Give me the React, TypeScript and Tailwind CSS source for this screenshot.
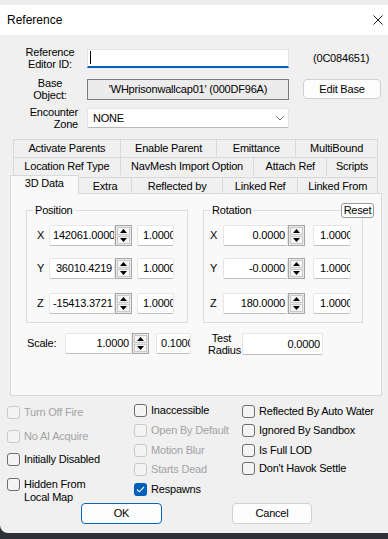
import React from "react";

// spin buttons next to the number boxes
function Spin() {
  return (
    <div className="flex h-[21px] w-[17px] shrink-0 flex-col gap-[1px] border border-[#a6a6a6] bg-[#e9e9e9] p-[1px]">
      <div className="flex flex-1 items-center justify-center border border-[#c9c9c9] bg-[#f6f6f6]">
        <svg width="7" height="4" viewBox="0 0 7 4">
          <path d="M3.5 0L7 4H0z" fill="#000" />
        </svg>
      </div>
      <div className="flex flex-1 items-center justify-center border border-[#c9c9c9] bg-[#f6f6f6]">
        <svg width="7" height="4" viewBox="0 0 7 4">
          <path d="M0 0h7L3.5 4z" fill="#000" />
        </svg>
      </div>
    </div>
  );
}

function Num({ v, className = "" }: { v: string; className?: string }) {
  return (
    <div
      className={`h-[21px] shrink-0 overflow-hidden whitespace-nowrap rounded-[2px] border border-[#e6e6e6] border-b-[#bdbdbd] bg-white pr-[2px] leading-[19px] ${className}`}>
      {v}
    </div>
  );
}

function Check({ label, disabled, checked, className = "" }: { label: string; disabled?: boolean; checked?: boolean; className?: string }) {
  return (
    <div className={`flex items-start gap-[4px] ${className}`}>
      {checked ? (
        <div className="flex h-[13px] w-[13px] shrink-0 items-center justify-center rounded-[3px] bg-[#005fb8]">
          <svg width="9" height="7" viewBox="0 0 9 7">
            <path d="M1 3.5l2.3 2.3L8 1" fill="none" stroke="#fff" strokeWidth="1.1" />
          </svg>
        </div>
      ) : (
        <div
          className={`h-[13px] w-[13px] shrink-0 rounded-[3px] border bg-[#f4f4f4] ${
            disabled ? "border-[#c9c9c9]" : "border-[#6e6e6e]"
          }`}
        />
      )}
      <div className={`whitespace-pre leading-[13px] ${disabled ? "text-[#a3a3a3]" : "text-black"}`}>{label}</div>
    </div>
  );
}

const pos = [
  ["X", "142061.0000", "mt-[8px]"],
  ["Y", "36010.4219", "mt-[12px]"],
  ["Z", "-15413.3721", "mt-[14px]"],
];
const rot = [
  ["X", "0.0000", "mt-[8px]"],
  ["Y", "-0.0000", "mt-[12px]"],
  ["Z", "180.0000", "mt-[14px]"],
];

export default function App() {
  return (
    <div className="h-[539px] w-[388px] overflow-hidden bg-[#2e3236] font-['Liberation_Sans',Arial,sans-serif] text-[11px] tracking-[-0.2px] text-black">
      <div className="h-[5px] bg-[#ececec]" />
      <div className="flex h-[528px] flex-col rounded-bl-[8px] bg-[#f0f0f0]">
        {/* title bar */}
        <div className="flex h-[30px] shrink-0 items-center justify-between bg-white pl-[7px] pr-[5px]">
          <span className="text-[12px] tracking-normal">Reference</span>
          <svg width="10" height="10" viewBox="0 0 10 10">
            <path d="M0.5 0.5l9 9M9.5 0.5l-9 9" stroke="#1a1a1a" strokeWidth="1" />
          </svg>
        </div>

        {/* header fields */}
        <div className="mt-[11px] flex flex-col pl-[22px]">
          <div className="flex h-[24px] items-center">
            <div className="w-[56px] text-center leading-[12px]">
              Reference
              <br />
              Editor ID:
            </div>
            <div className="ml-[9px] flex h-[19px] w-[202px] items-center border border-[#e3e3e3] border-b-2 border-b-[#005fb8] bg-white pl-[2px]">
              <div className="h-[13px] w-px bg-black" />
            </div>
            <div className="ml-[24px]">(0C084651)</div>
          </div>

          <div className="mt-[7px] flex h-[24px] items-center">
            <div className="w-[56px] text-center leading-[12px]">
              Base
              <br />
              Object:
            </div>
            <div className="ml-[9px] h-[21px] w-[202px] border border-[#7c7c7c] bg-[#ececec] text-center leading-[19px]">
              'WHprisonwallcap01' (000DF96A)
            </div>
            <div className="ml-[14px] h-[20px] w-[78px] rounded-[4px] border border-[#d0d0d0] bg-[#fdfdfd] text-center leading-[18px]">
              Edit Base
            </div>
          </div>

          <div className="mt-[5px] flex h-[24px] items-center">
            <div className="w-[56px] text-right leading-[12px]">
              Encounter
              <br />
              Zone
            </div>
            <div className="ml-[9px] flex h-[20px] w-[202px] items-center justify-between rounded-[2px] border border-[#e3e3e3] border-b-[#b8b8b8] bg-white pl-[5px] pr-[4px]">
              <span>NONE</span>
              <svg width="8" height="5" viewBox="0 0 8 5">
                <path d="M0.5 0.5L4 4l3.5-3.5" fill="none" stroke="#6a6a6a" strokeWidth="1" />
              </svg>
            </div>
          </div>
        </div>

        {/* tabs */}
        <div className="mt-[9px] flex flex-col px-[10px]">
          <div className="ml-[3px] flex h-[18px]">
            <div className="w-[108px] border-l border-t border-r border-[#d9d9d9] text-center leading-[17px]">Activate Parents</div>
            <div className="w-[97px] border-t border-r border-[#d9d9d9] text-center leading-[17px]">Enable Parent</div>
            <div className="w-[79px] border-t border-r border-[#d9d9d9] text-center leading-[17px]">Emittance</div>
            <div className="w-[82px] border-t border-r border-[#d9d9d9] text-center leading-[17px]">MultiBound</div>
          </div>
          <div className="ml-[3px] flex h-[18px]">
            <div className="w-[108px] border-l border-t border-r border-[#d9d9d9] text-center leading-[17px]">Location Ref Type</div>
            <div className="w-[134px] border-t border-r border-[#d9d9d9] text-center leading-[17px]">NavMesh Import Option</div>
            <div className="w-[73px] border-t border-r border-[#d9d9d9] text-center leading-[17px]">Attach Ref</div>
            <div className="w-[51px] border-t border-r border-[#d9d9d9] text-center leading-[17px]">Scripts</div>
          </div>
          <div className="flex h-[19px] items-end">
            <div className="relative z-10 h-[19px] w-[69px] border-l border-t border-r border-[#d9d9d9] bg-[#f9f9f9] text-center leading-[15px]">3D Data</div>
            <div className="h-[17px] w-[54px] border-t border-r border-[#d9d9d9] text-center leading-[16px]">Extra</div>
            <div className="h-[17px] w-[91px] border-t border-r border-[#d9d9d9] text-center leading-[16px]">Reflected by</div>
            <div className="h-[17px] w-[76px] border-t border-r border-[#d9d9d9] text-center leading-[16px]">Linked Ref</div>
            <div className="h-[17px] w-[80px] border-t border-r border-[#d9d9d9] text-center leading-[16px]">Linked From</div>
          </div>

          {/* tab page */}
          <div className="-mt-px flex h-[203px] w-[372px] flex-col border border-[#d9d9d9] bg-[#f9f9f9]">
            <div className="mt-[10px] flex pl-[15px]">
              <fieldset className="h-[119px] w-[162px] border border-[#dcdcdc]">
                <legend className="ml-[6px] px-[2px] leading-[13px]">Position</legend>
                {pos.map(([l, v, mt]) => (
                  <div key={l} className={`flex items-center pl-[10px] ${mt}`}>
                    <div className="w-[12px]">{l}</div>
                    <Num v={v} className="w-[66px] pl-[3px] text-right" />
                    <Spin />
                    <Num v="1.0000" className="ml-[5px] w-[37px] pl-[5px]" />
                  </div>
                ))}
              </fieldset>

              <div className="relative ml-[15px]">
                <fieldset className="h-[119px] w-[160px] border border-[#dcdcdc]">
                  <legend className="ml-[6px] px-[2px] leading-[13px]">Rotation</legend>
                  {rot.map(([l, v, mt]) => (
                    <div key={l} className={`flex items-center pl-[6px] ${mt}`}>
                      <div className="w-[13px]">{l}</div>
                      <Num v={v} className="w-[65px] pl-[3px] text-right" />
                      <Spin />
                      <Num v="1.0000" className="ml-[8px] w-[38px] pl-[6px]" />
                    </div>
                  ))}
                </fieldset>
                <div className="absolute right-[-11px] top-[-1px] h-[15px] w-[33px] rounded-[3px] border border-[#9a9a9a] bg-white text-center leading-[13px]">
                  Reset
                </div>
              </div>
            </div>

            <div className="mt-[9px] flex h-[23px] items-center pl-[16px]">
              <div className="w-[38px]">Scale:</div>
              <Num v="1.0000" className="w-[67px] pl-[3px] text-right" />
              <Spin />
              <Num v="0.1000" className="ml-[7px] w-[35px] pl-[4px]" />
              <div className="ml-[17px] w-[27px] text-center leading-[12px]">
                Test
                <br />
                Radius
              </div>
              <div className="ml-[7px] h-[22px] w-[81px] rounded-[2px] border border-[#e6e6e6] border-b-[#bdbdbd] bg-white pr-[2px] text-right leading-[20px]">
                0.0000
              </div>
            </div>
          </div>
        </div>

        {/* flags */}
        <div className="grid h-[104px] grid-cols-[127px_108px_1fr] pl-[7px]">
          <div className="flex flex-col">
            <Check label="Turn Off Fire" disabled className="mt-[10px]" />
            <Check label="No AI Acquire" disabled className="mt-[11px]" />
            <Check label="Initially Disabled" className="mt-[10px]" />
            <Check label={"Hidden From\nLocal Map"} className="mt-[12px]" />
          </div>
          <div className="flex flex-col">
            <Check label="Inaccessible" className="mt-[8px]" />
            <Check label="Open By Default" disabled className="mt-[7px]" />
            <Check label="Motion Blur" disabled className="mt-[7px]" />
            <Check label="Starts Dead" disabled className="mt-[6px]" />
            <Check label="Respawns" checked className="mt-[7px]" />
          </div>
          <div className="flex flex-col">
            <Check label="Reflected By Auto Water" className="mt-[9px]" />
            <Check label="Ignored By Sandbox" className="mt-[6px]" />
            <Check label="Is Full LOD" className="mt-[7px]" />
            <Check label="Don't Havok Settle" className="mt-[5px]" />
          </div>
        </div>

        <div className="mt-[3px] flex pl-[81px]">
          <div className="h-[21px] w-[81px] rounded-[4px] border border-[#0067c0] bg-[#fdfdfd] text-center leading-[19px]">OK</div>
          <div className="ml-[70px] h-[21px] w-[80px] rounded-[4px] border border-[#d0d0d0] bg-[#fdfdfd] text-center leading-[19px]">
            Cancel
          </div>
        </div>
      </div>
    </div>
  );
}
